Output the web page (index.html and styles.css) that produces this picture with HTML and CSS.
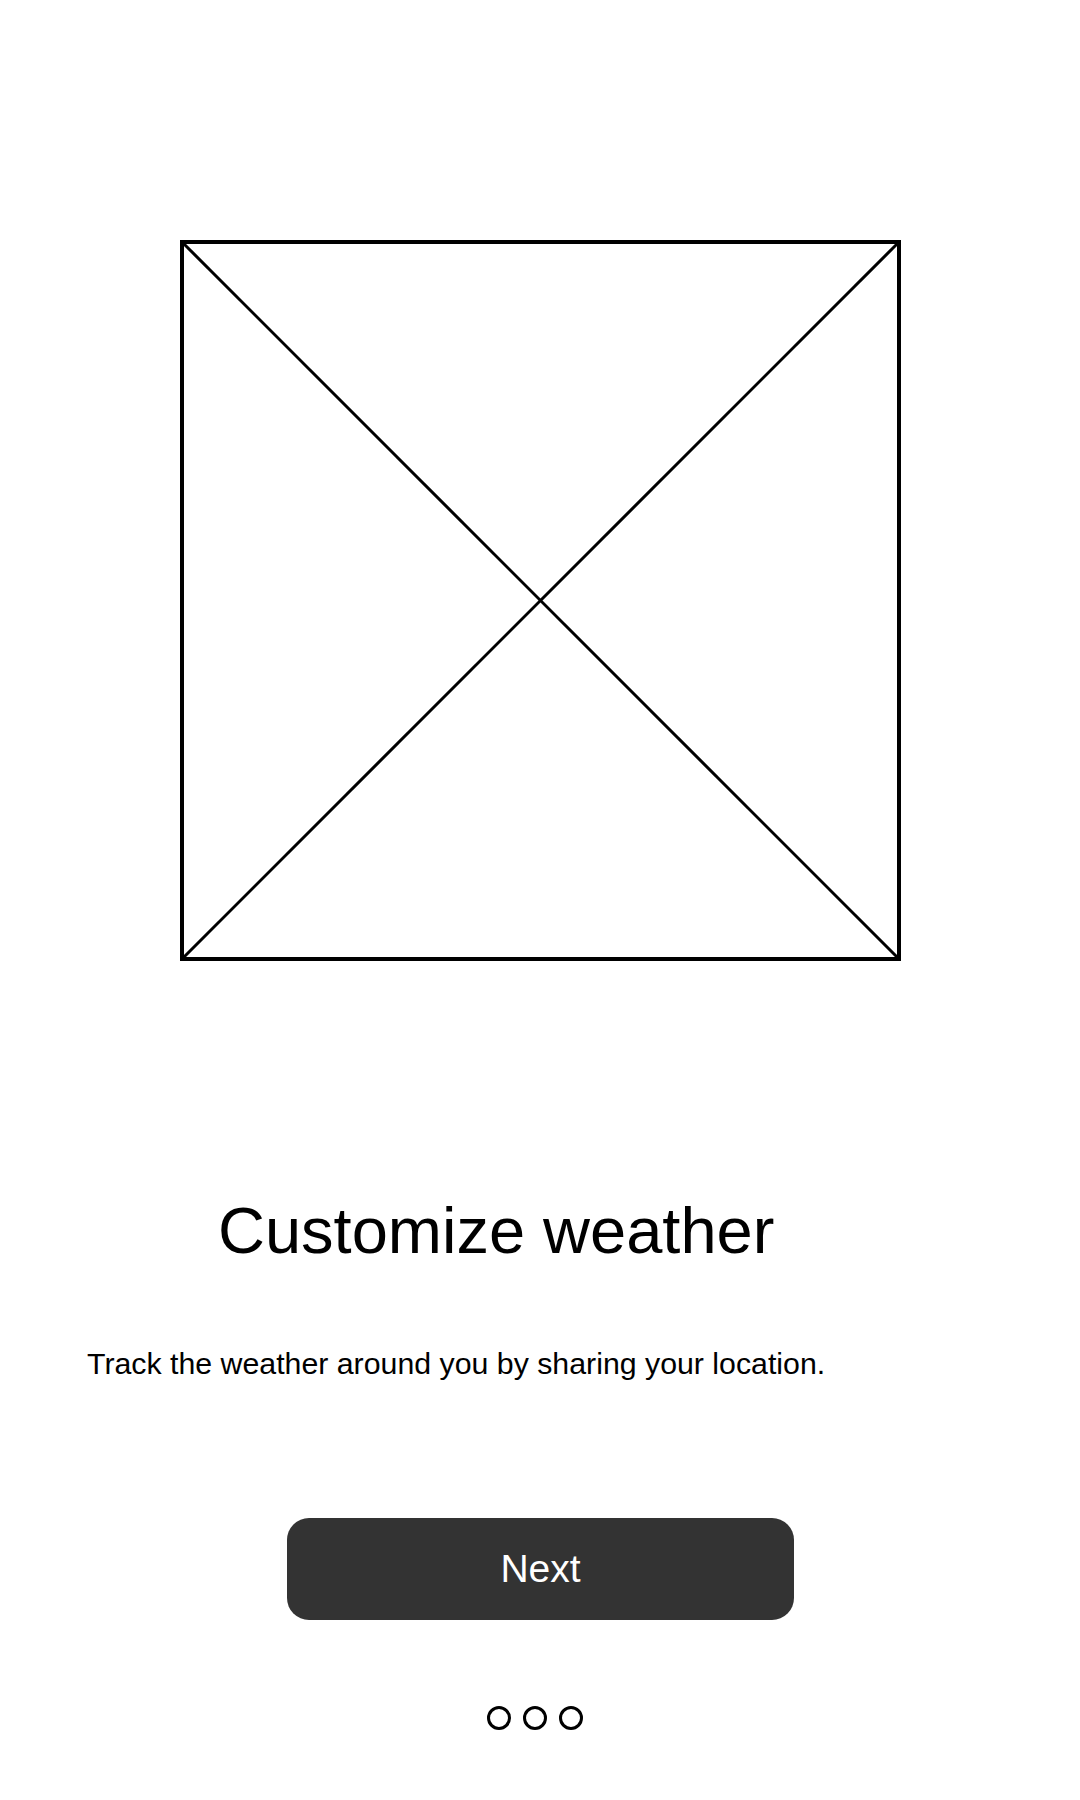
FILE: index.html
```html
<!DOCTYPE html>
<html lang="en">
<head>
<meta charset="utf-8">
<title>Customize weather</title>
<link rel="stylesheet" href="styles.css">
</head>
<body>
<main class="screen">
  <div class="placeholder">
    <svg class="placeholder-svg" viewBox="0 0 721 721" width="721" height="721" aria-hidden="true">
      <rect x="2" y="2" width="717" height="717" fill="none" stroke="#000" stroke-width="4"/>
      <line x1="2" y1="2" x2="719" y2="719" stroke="#000" stroke-width="3"/>
      <line x1="719" y1="2" x2="2" y2="719" stroke="#000" stroke-width="3"/>
    </svg>
  </div>
  <h1 class="title">Customize weather</h1>
  <p class="description">Track the weather around you by sharing your location.</p>
  <div class="actions">
    <button class="next-btn" type="button">Next</button>
  </div>
  <div class="dots">
    <span class="dot"></span>
    <span class="dot"></span>
    <span class="dot"></span>
  </div>
</main>
</body>
</html>
```

FILE: styles.css
```css
html, body {
  margin: 0;
  padding: 0;
  background: #fff;
}

body {
  font-family: "Liberation Sans", Arial, sans-serif;
  color: #000;
  width: 1080px;
  min-height: 1800px;
}

.screen {
  display: flex;
  flex-direction: column;
  padding-top: 240px;
}

.placeholder {
  display: flex;
  padding-left: 180px;
}

.placeholder-svg {
  display: block;
}

.title {
  margin: 237px 0 0 0;
  padding-left: 218px;
  font-size: 65px;
  line-height: 65px;
  font-weight: 400;
}

.description {
  margin: 86px 0 0 0;
  padding-left: 87px;
  font-size: 30.3px;
  line-height: 30px;
}

.actions {
  display: flex;
  justify-content: center;
  margin-top: 139px;
}

.next-btn {
  width: 507px;
  height: 102px;
  border: none;
  border-radius: 22px;
  background: #333333;
  color: #fff;
  font-family: "Liberation Sans", Arial, sans-serif;
  font-size: 39px;
  padding: 0;
  margin-left: 1px;
}

.dots {
  display: flex;
  justify-content: center;
  gap: 12px;
  margin-top: 86px;
  padding-right: 11px;
}

.dot {
  width: 24px;
  height: 24px;
  box-sizing: border-box;
  border: 3px solid #000;
  border-radius: 50%;
}
```
